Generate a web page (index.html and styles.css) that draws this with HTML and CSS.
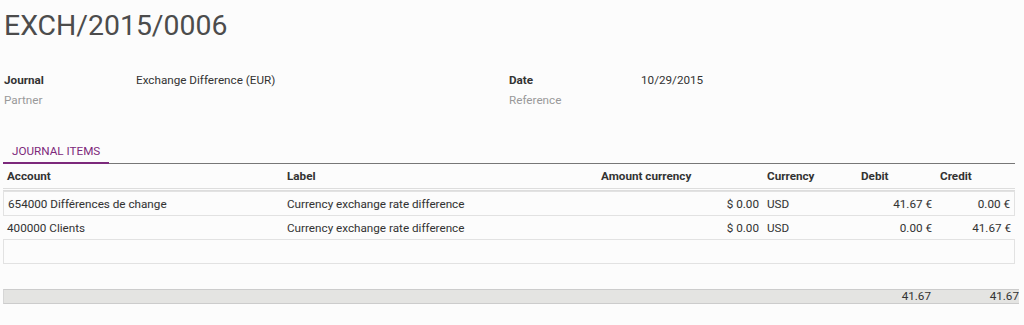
FILE: index.html
```html
<!DOCTYPE html>
<html lang="en">
<head>
    <meta charset="UTF-8">
    <title>EXCH/2015/0006</title>
    <link rel="stylesheet" href="styles.css">
</head>
<body>
    <div class="sheet">
        <h1 class="title">EXCH/2015/0006</h1>

        <div class="fields">
            <div class="group">
                <div class="field"><span class="lbl">Journal</span><span class="val">Exchange Difference (EUR)</span></div>
                <div class="field"><span class="lbl empty">Partner</span><span class="val"></span></div>
            </div>
            <div class="group">
                <div class="field"><span class="lbl">Date</span><span class="val">10/29/2015</span></div>
                <div class="field"><span class="lbl empty">Reference</span><span class="val"></span></div>
            </div>
        </div>

        <div class="tabs">
            <a class="tab active">JOURNAL ITEMS</a>
        </div>

        <table class="lines">
            <colgroup>
                <col class="c-account">
                <col class="c-label">
                <col class="c-amount">
                <col class="c-cur">
                <col class="c-debit">
                <col class="c-credit">
            </colgroup>
            <thead>
                <tr>
                    <th>Account</th>
                    <th>Label</th>
                    <th class="amount-head">Amount currency</th>
                    <th>Currency</th>
                    <th>Debit</th>
                    <th>Credit</th>
                </tr>
            </thead>
            <tbody>
                <tr class="selected">
                    <td>654000 Différences de change</td>
                    <td>Currency exchange rate difference</td>
                    <td class="num">$ 0.00</td>
                    <td>USD</td>
                    <td class="num">41.67 €</td>
                    <td class="num">0.00 €</td>
                </tr>
                <tr>
                    <td>400000 Clients</td>
                    <td>Currency exchange rate difference</td>
                    <td class="num">$ 0.00</td>
                    <td>USD</td>
                    <td class="num">0.00 €</td>
                    <td class="num">41.67 €</td>
                </tr>
                <tr class="blank">
                    <td colspan="6"></td>
                </tr>
            </tbody>
        </table>

        <div class="totals">
            <span class="sum debit">41.67</span>
            <span class="sum credit">41.67</span>
        </div>
    </div>
</body>
</html>
```

FILE: styles.css
```css
body{
    margin: 0;
    background-color: #fcfcfc;
    font-family: Roboto, "Liberation Sans", sans-serif;
    font-size: 11.7px;
    color: #333;
}
.sheet{
    padding: 0 0 0 3px;
    width: 1012px;
}
.title{
    margin: 0;
    padding-top: 9px;
    font-size: 28.4px;
    font-weight: 400;
    line-height: 34px;
    color: #4c4c4c;
    padding-left: 1px;
}
.fields{
    display: flex;
    margin-top: 27px;
    padding-left: 1px;
}
.group{
    width: 505px;
}
.field{
    display: flex;
    height: 20px;
    line-height: 20px;
}
.lbl{
    width: 132px;
    font-weight: 700;
    color: #333;
}
.lbl.empty{
    font-weight: 400;
    color: #999;
}
.val{
    color: #333;
}
.tabs{
    display: flex;
    margin-top: 32px;
    border-bottom: 1px solid #777;
}
.tab{
    padding: 0 9px 2px 9px;
    line-height: 18px;
    color: #7c297b;
    margin-bottom: -1px;
}
.tab.active{
    border-bottom: 2px solid #7c297b;
}
.lines{
    width: 1012px;
    border-collapse: separate;
    border-spacing: 0;
    table-layout: fixed;
}
.c-account{ width: 280px; }
.c-label{ width: 314px; }
.c-amount{ width: 166px; }
.c-cur{ width: 94px; }
.c-debit{ width: 79px; }
.c-credit{ width: 79px; }
.lines th{
    text-align: left;
    font-weight: 700;
    padding: 0 4px;
    height: 24px;
    border-bottom: 3px double #ddd;
}
.lines td{
    padding: 0 4px;
    height: 23px;
    border-bottom: 1px solid #e2e2e2;
    white-space: nowrap;
}
.lines .num{
    text-align: right;
}
.selected td{
    border-top: 1px solid #e2e2e2;
    text-shadow: 0 0 2px #fff, 0 0 1px #ddd;
}
.selected td:first-child,
.blank td{
    border-left: 1px solid #e2e2e2;
}
.selected td:last-child,
.blank td{
    border-right: 1px solid #e2e2e2;
}
.totals{
    display: flex;
    justify-content: flex-end;
    margin-top: 25px;
    width: 1015px;
    height: 13px;
    line-height: 13px;
    background-color: #e4e4e2;
    border-top: 1px solid #ccc;
    border-bottom: 1px solid #ccc;
    border-left: 1px solid #d6d6d6;
}
.sum{
    width: 79px;
    text-align: right;
    color: #333;
}
.sum.debit{
    margin-right: 9px;
}
```
